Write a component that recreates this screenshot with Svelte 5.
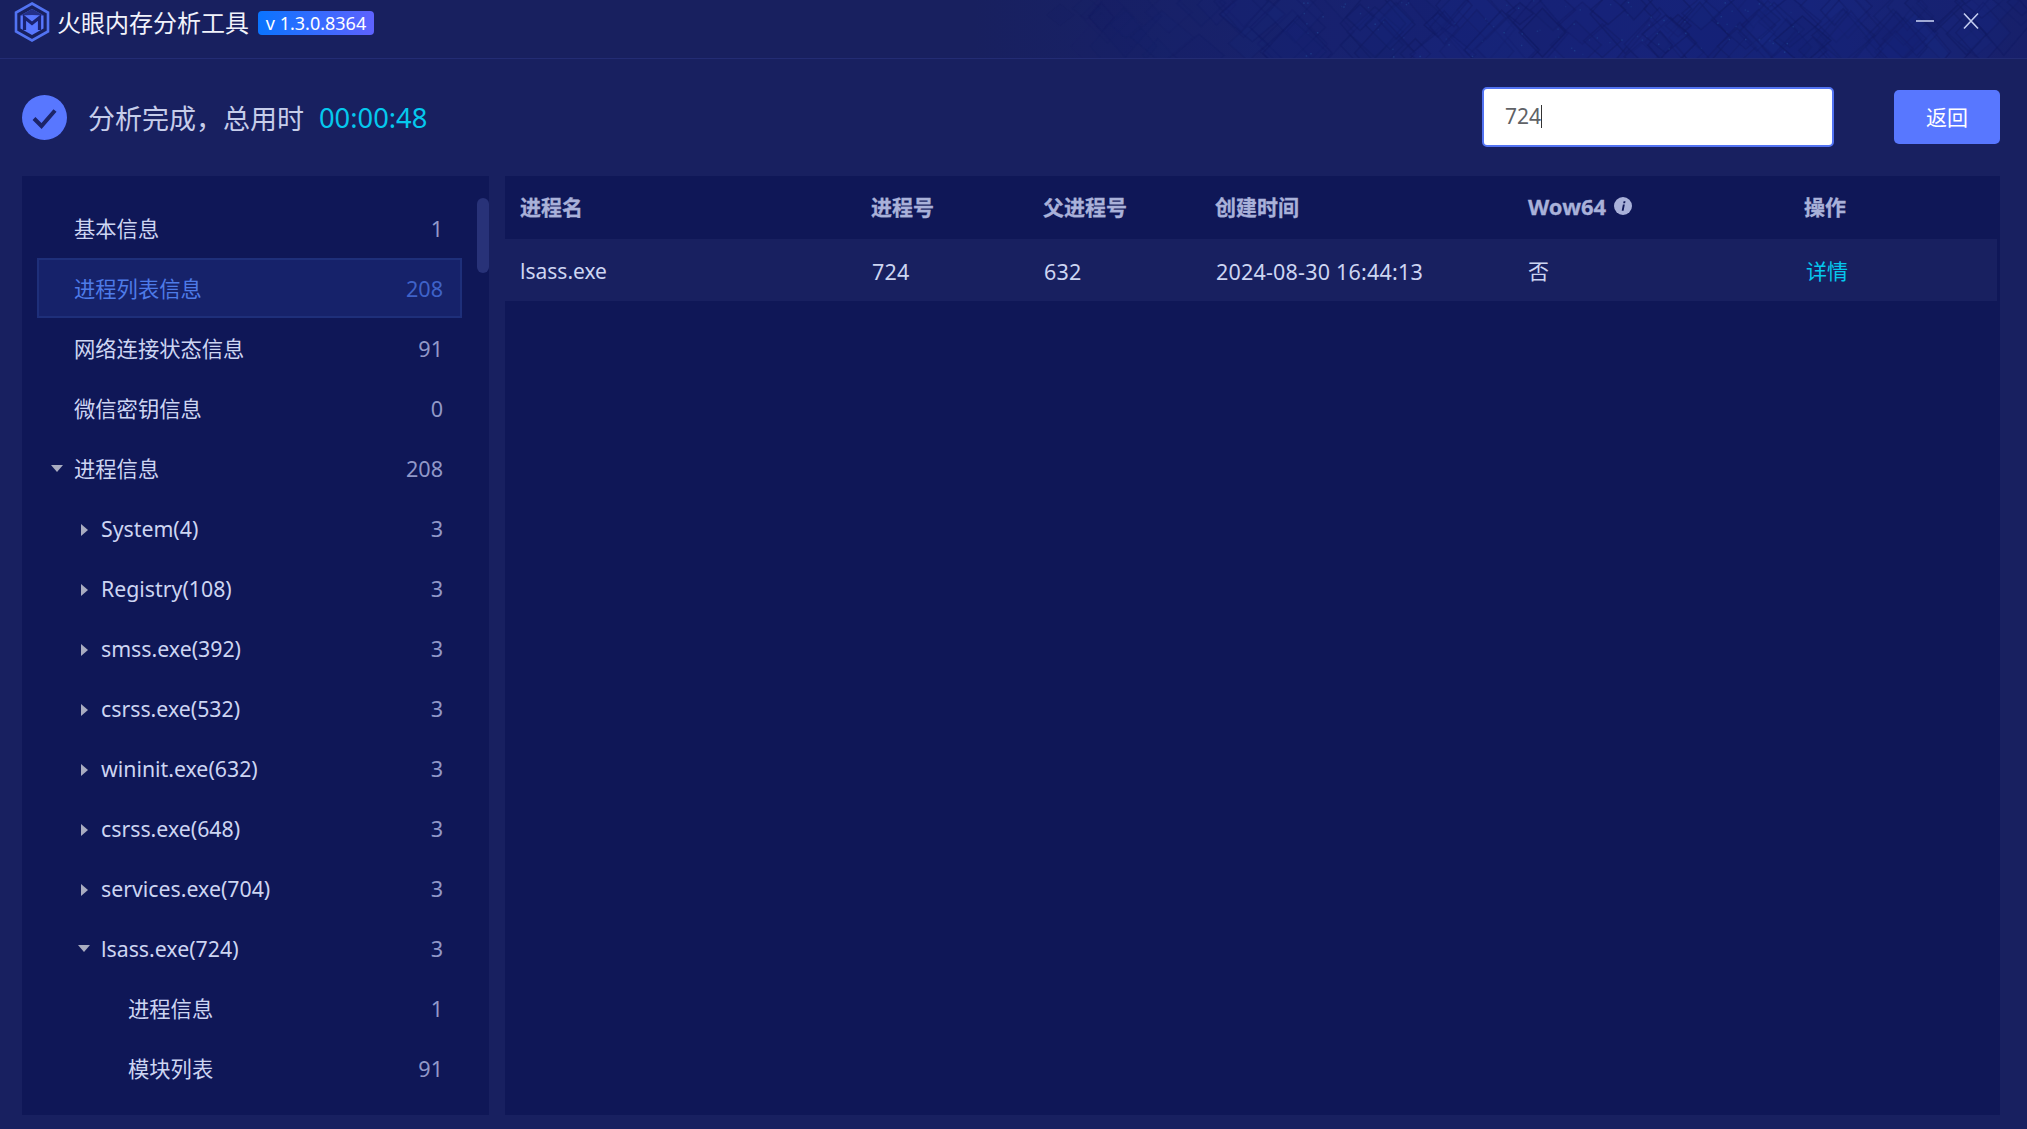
<script>
  const tree = [
    { label: '基本信息', count: 1, level: 0 },
    { label: '进程列表信息', count: 208, level: 0, active: true },
    { label: '网络连接状态信息', count: 91, level: 0 },
    { label: '微信密钥信息', count: 0, level: 0 },
    { label: '进程信息', count: 208, level: 0, caret: 'down' },
    { label: 'System(4)', count: 3, level: 1, caret: 'right' },
    { label: 'Registry(108)', count: 3, level: 1, caret: 'right' },
    { label: 'smss.exe(392)', count: 3, level: 1, caret: 'right' },
    { label: 'csrss.exe(532)', count: 3, level: 1, caret: 'right' },
    { label: 'wininit.exe(632)', count: 3, level: 1, caret: 'right' },
    { label: 'csrss.exe(648)', count: 3, level: 1, caret: 'right' },
    { label: 'services.exe(704)', count: 3, level: 1, caret: 'right' },
    { label: 'lsass.exe(724)', count: 3, level: 1, caret: 'down' },
    { label: '进程信息', count: 1, level: 2 },
    { label: '模块列表', count: 91, level: 2 }
  ];
  const isCjk = (s) => /[\u4e00-\u9fff]/.test(s);

  // Deterministic diamond texture for the right part of the title bar
  const diamonds = [];
  const specks = [];
  let seed = 7;
  const rnd = () => {
    seed = (seed * 16807) % 2147483647;
    return seed / 2147483647;
  };
  for (let i = 0; i < 110; i++) {
    const x = 1050 + rnd() * 977;
    const y = rnd() * 60;
    const w = 12 + rnd() * 26;
    const h = w * (0.8 + rnd() * 0.4);
    const fade = Math.min(1, (x - 1050) / 350);
    diamonds.push({
      points: `${x},${y - h} ${x + w},${y} ${x},${y + h} ${x - w},${y}`,
      fill: i % 2 === 0 ? '#18277f' : '#152070',
      opacity: (0.12 + rnd() * 0.2) * fade,
      line: (0.25 + rnd() * 0.35) * fade
    });
  }
  for (let i = 0; i < 90; i++) {
    specks.push({ x: 1300 + rnd() * 500, y: rnd() * 58, o: 0.2 + rnd() * 0.4 });
  }
</script>

<div class="app">
  <header class="titlebar">
    <svg class="texture" viewBox="0 0 2027 58" width="2027" height="58" aria-hidden="true">
      {#each diamonds as d}
        <polygon points={d.points} fill={d.fill} fill-opacity={d.opacity} stroke="#111a62" stroke-opacity={d.line} stroke-width="1.5" />
      {/each}
      {#each specks as s}
        <rect x={s.x} y={s.y} width="1.5" height="1.5" fill="#23509a" opacity={s.o} />
      {/each}
    </svg>
    <svg class="logo" viewBox="0 0 36 40" width="36" height="40" aria-hidden="true">
      <path d="M18 1.5 34 10.5V29.5L18 38.5 2 29.5V10.5Z" fill="none" stroke="#5273f2" stroke-width="2.6" />
      <path d="M18 7 29.5 13.5V26.5L18 33 6.5 26.5V13.5Z" fill="#5877ff" />
      <path d="M18 7 29.5 13.5 18 13 6.5 13.5Z" fill="#243089" />
      <path d="M10.5 28V15.5L18 21.5 25.5 15.5V28" fill="none" stroke="#1a2270" stroke-width="3.2" />
    </svg>
    <span class="title">火眼内存分析工具</span>
    <span class="version">v 1.3.0.8364</span>
    <div class="winbtns">
      <svg viewBox="0 0 18 18" width="18" height="18" aria-hidden="true"><path d="M0 9H18" stroke="#c4cdf0" stroke-width="1.6" /></svg>
      <svg viewBox="0 0 18 18" width="18" height="18" aria-hidden="true"><path d="M2 1.5 16 16.5M16 1.5 2 16.5" stroke="#c4cdf0" stroke-width="1.6" /></svg>
    </div>
  </header>

  <section class="status">
    <svg class="check" viewBox="0 0 45 45" width="45" height="45" aria-hidden="true">
      <circle cx="22.5" cy="22.5" r="22.5" fill="#5877ff" />
      <path d="M12 23.5 19.5 31 33 15.5" fill="none" stroke="#1c2468" stroke-width="4" />
    </svg>
    <span class="done">分析完成&#xFF0C;总用时</span>
    <span class="time">00:00:48</span>
    <div class="search"><span class="val">724</span><i class="cursor"></i></div>
    <button class="back">返回</button>
  </section>

  <div class="content">
    <aside class="side">
      <div class="scroll"></div>
      {#each tree as row}
        <div class="row lv{row.level}" class:active={row.active}>
          {#if row.caret === 'down'}
            <i class="caret-down"></i>
          {:else if row.caret === 'right'}
            <i class="caret-right"></i>
          {/if}
          <span class="lbl" class:cjk={isCjk(row.label)}>{row.label}</span>
          <span class="cnt">{row.count}</span>
        </div>
      {/each}
    </aside>

    <main class="main">
      <div class="grid head">
        <span>进程名</span>
        <span>进程号</span>
        <span>父进程号</span>
        <span>创建时间</span>
        <span class="wow">Wow64
          <svg viewBox="0 0 18 18" width="18" height="18" aria-hidden="true">
            <circle cx="9" cy="9" r="9" fill="#a9b1d9" />
            <path d="M9.6 4.2h1.9l-.4 2h-1.9ZM8.9 7.6h1.9l-1.2 6.2H7.7Z" fill="#0f1757" />
          </svg>
        </span>
        <span>操作</span>
      </div>
      <div class="grid data">
        <span class="latin">lsass.exe</span>
        <span class="latin num">724</span>
        <span class="latin num">632</span>
        <span class="latin num">2024-08-30 16:44:13</span>
        <span>否</span>
        <span class="link">详情</span>
      </div>
    </main>
  </div>
</div>

<style>
  :global(body) {
    margin: 0;
    background: #182060;
  }
  .app {
    width: 2027px;
    height: 1129px;
    background: #182060;
    font-family: "Noto Sans", "Noto Sans CJK SC", sans-serif;
    overflow: hidden;
    display: flex;
    flex-direction: column;
  }
  .titlebar {
    position: relative;
    height: 58px;
    flex: none;
    display: flex;
    align-items: center;
    padding-left: 14px;
    box-sizing: content-box;
    border-bottom: 1px solid #232c74;
    background: linear-gradient(90deg, #18205f 0%, #18205f 48%, #17237a 78%, #16247c 88%, #18206a 100%);
    overflow: hidden;
  }
  .texture {
    position: absolute;
    left: 0;
    top: 0;
  }
  .logo {
    position: relative;
    flex: none;
    margin-top: -15px;
  }
  .title {
    position: relative;
    margin-left: 7px;
    margin-top: -14px;
    font-size: 24px;
    line-height: 32px;
    color: #f1f3fb;
    font-family: "Noto Sans CJK SC", sans-serif;
  }
  .version {
    position: relative;
    margin-left: 9px;
    margin-top: -12px;
    height: 24px;
    width: 116px;
    border-radius: 4px;
    background: linear-gradient(90deg, #0a74ff, #5e62ff);
    color: #fff;
    font-size: 18px;
    line-height: 24px;
    text-align: center;
  }
  .winbtns {
    position: relative;
    margin-left: auto;
    margin-right: 47px;
    margin-top: -17px;
    display: flex;
    gap: 28px;
  }
  .status {
    height: 117px;
    flex: none;
    display: flex;
    align-items: center;
    padding: 0 27px 0 22px;
    box-sizing: border-box;
  }
  .done {
    margin-left: 21px;
    font-size: 27px;
    line-height: 40px;
    color: #c6cdea;
    font-family: "Noto Sans CJK SC", sans-serif;
  }
  .time {
    margin-left: 15px;
    font-size: 27.3px;
    line-height: 40px;
    color: #05c8ee;
  }
  .search {
    margin-left: auto;
    margin-bottom: 2px;
    width: 352px;
    height: 60px;
    box-sizing: border-box;
    background: #fff;
    border: 2px solid #5273f2;
    border-radius: 5px;
    display: flex;
    align-items: center;
    padding: 0 0 1px 21px;
    color: #606266;
    font-size: 21px;
  }
  .cursor {
    width: 1px;
    height: 23px;
    background: #333;
  }
  .back {
    margin-left: 60px;
    margin-bottom: 2px;
    width: 106px;
    height: 54px;
    border: 0;
    border-radius: 5px;
    background: #5877ff;
    color: #fff;
    font-size: 21px;
    font-family: "Noto Sans CJK SC", sans-serif;
    padding: 0 0 2px;
  }
  .content {
    display: flex;
    gap: 16px;
    padding: 0 27px 14px 22px;
    height: 939px;
    flex: none;
  }
  .side {
    position: relative;
    width: 467px;
    flex: none;
    background: #0f1757;
    padding: 22px 27px 0 15px;
    box-sizing: border-box;
    overflow: hidden;
  }
  .scroll {
    position: absolute;
    right: 0;
    top: 22px;
    width: 12px;
    height: 75px;
    border-radius: 6px;
    background: #283278;
  }
  .row {
    position: relative;
    height: 60px;
    display: flex;
    align-items: center;
    font-size: 21.3px;
    color: #cdd5f2;
    box-sizing: border-box;
    border: 2px solid transparent;
    padding-right: 17px;
  }
  .row.active {
    background: #16226a;
    border-color: #1e2f7a;
    color: #4e7be8;
  }
  .lv0 { padding-left: 35px; }
  .lv1 { padding-left: 62px; }
  .lv2 { padding-left: 89px; }
  .lbl.cjk { margin-bottom: 2px; }
  .cnt {
    margin-left: auto;
    color: #9198c8;
    font-size: 21.6px;
  }
  .active .cnt { color: #3f62c8; }
  .caret-down {
    position: absolute;
    top: 25px;
    width: 0;
    height: 0;
    border-left: 6px solid transparent;
    border-right: 6px solid transparent;
    border-top: 7px solid #a9acc0;
  }
  .lv0 .caret-down { left: 12px; }
  .lv1 .caret-down { left: 39px; }
  .caret-right {
    position: absolute;
    left: 42px;
    top: 24px;
    width: 0;
    height: 0;
    border-top: 6px solid transparent;
    border-bottom: 6px solid transparent;
    border-left: 7px solid #a9acc0;
  }
  .main {
    flex: 1;
    background: #0f1757;
    padding-right: 3px;
  }
  .grid {
    display: grid;
    align-items: center;
    padding-left: 15px;
    font-size: 21px;
  }
  .head {
    grid-template-columns: 351px 172px 172px 313px 276px 1fr;
    height: 63px;
    box-sizing: border-box;
    padding-bottom: 3px;
    color: #a9b1d9;
    font-weight: 700;
    -webkit-text-stroke: 0.3px #a9b1d9;
  }
  .data {
    grid-template-columns: 352px 172px 172px 312px 278px 1fr;
    height: 62px;
    background: #182060;
    color: #cdd5f2;
  }
  .latin { padding-top: 2px; }
  .num {
    font-size: 21.5px;
    letter-spacing: 0.2px;
  }
  .wow {
    display: flex;
    align-items: center;
    gap: 8px;
    font-size: 22px;
  }
  .link { color: #05c8ee; }
</style>
